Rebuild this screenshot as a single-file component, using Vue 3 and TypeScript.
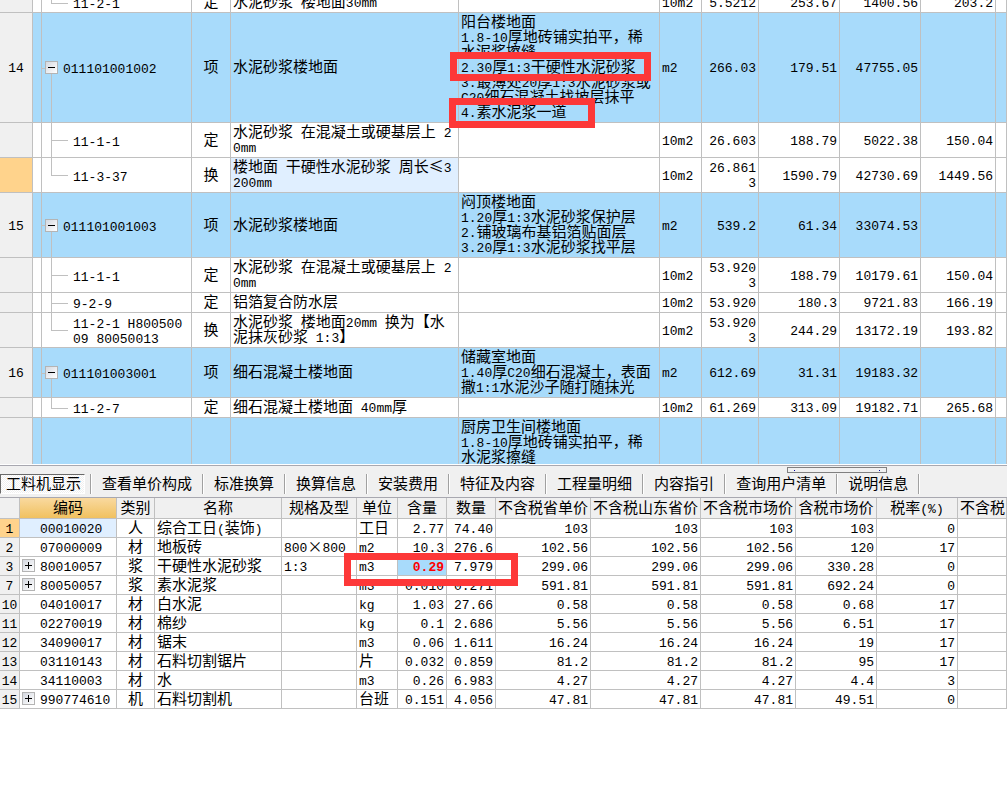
<script setup lang="ts">
import { h, ref } from 'vue'

interface BillRow {
  no: string
  kind: 'item' | 'child' | 'last' | 'partial'
  code: string
  type: string
  name: string
  feature?: string
  unit: string
  qty: string
  price: string
  total: string
  labor: string
  current?: boolean
}

interface MaterialRow {
  no: number
  code: string
  group?: boolean
  type: string
  name: string
  spec: string
  unit: string
  content: string
  qty: string
  prices: string[]
}

// Splits a string so that half-width and full-width characters get their own face and size.
const MixedText = (props: { text: string }) =>
  h(
    'span',
    { class: 'mixed' },
    (props.text.match(/[ -~]+|[^ -~]+/g) ?? []).map((run) =>
      /^[ -~]/.test(run) ? h('span', { class: 'half' }, run) : run,
    ),
  )
MixedText.props = ['text']

const billRows: BillRow[] = [
  { no: '', kind: 'last', code: '11-2-1', type: '定', name: '水泥砂浆 楼地面30mm', unit: '10m2', qty: '5.5212', price: '253.67', total: '1400.56', labor: '203.2' },
  { no: '14', kind: 'item', code: '011101001002', type: '项', name: '水泥砂浆楼地面', feature: '阳台楼地面\n1.8-10厚地砖铺实拍平，稀\n水泥浆擦缝\n2.30厚1:3干硬性水泥砂浆\n3.最薄处20厚1:3水泥砂浆或\nC20细石混凝土找坡层抹平\n4.素水泥浆一道', unit: 'm2', qty: '266.03', price: '179.51', total: '47755.05', labor: '' },
  { no: '', kind: 'child', code: '11-1-1', type: '定', name: '水泥砂浆 在混凝土或硬基层上 2\n0mm', unit: '10m2', qty: '26.603', price: '188.79', total: '5022.38', labor: '150.04' },
  { no: '', kind: 'last', code: '11-3-37', type: '换', name: '楼地面 干硬性水泥砂浆 周长≤3\n200mm', unit: '10m2', qty: '26.861\n3', price: '1590.79', total: '42730.69', labor: '1449.56', current: true },
  { no: '15', kind: 'item', code: '011101001003', type: '项', name: '水泥砂浆楼地面', feature: '闷顶楼地面\n1.20厚1:3水泥砂浆保护层\n2.铺玻璃布基铝箔贴面层\n3.20厚1:3水泥砂浆找平层', unit: 'm2', qty: '539.2', price: '61.34', total: '33074.53', labor: '' },
  { no: '', kind: 'child', code: '11-1-1', type: '定', name: '水泥砂浆 在混凝土或硬基层上 2\n0mm', unit: '10m2', qty: '53.920\n3', price: '188.79', total: '10179.61', labor: '150.04' },
  { no: '', kind: 'child', code: '9-2-9', type: '定', name: '铝箔复合防水层', unit: '10m2', qty: '53.920', price: '180.3', total: '9721.83', labor: '166.19' },
  { no: '', kind: 'last', code: '11-2-1 H800500\n09 80050013', type: '换', name: '水泥砂浆 楼地面20mm 换为【水\n泥抹灰砂浆 1:3】', unit: '10m2', qty: '53.920\n3', price: '244.29', total: '13172.19', labor: '193.82' },
  { no: '16', kind: 'item', code: '011101003001', type: '项', name: '细石混凝土楼地面', feature: '储藏室地面\n1.40厚C20细石混凝土，表面\n撒1:1水泥沙子随打随抹光', unit: 'm2', qty: '612.69', price: '31.31', total: '19183.32', labor: '' },
  { no: '', kind: 'last', code: '11-2-7', type: '定', name: '细石混凝土楼地面 40mm厚', unit: '10m2', qty: '61.269', price: '313.09', total: '19182.71', labor: '265.68' },
  { no: '', kind: 'partial', code: '', type: '', name: '', feature: '厨房卫生间楼地面\n1.8-10厚地砖铺实拍平，稀\n水泥浆擦缝', unit: '', qty: '', price: '', total: '', labor: '' },
]

const tabs = ['工料机显示', '查看单价构成', '标准换算', '换算信息', '安装费用', '特征及内容', '工程量明细', '内容指引', '查询用户清单', '说明信息']
const activeTab = ref(0)

const headers = ['编码', '类别', '名称', '规格及型', '单位', '含量', '数量', '不含税省单价', '不含税山东省价', '不含税市场价', '含税市场价', '税率(%)', '不含税']

const materials: MaterialRow[] = [
  { no: 1, code: '00010020', type: '人', name: '综合工日(装饰)', spec: '', unit: '工日', content: '2.77', qty: '74.40', prices: ['103', '103', '103', '103', '0'] },
  { no: 2, code: '07000009', type: '材', name: '地板砖', spec: '800×800', unit: 'm2', content: '10.3', qty: '276.6', prices: ['102.56', '102.56', '102.56', '120', '17'] },
  { no: 3, code: '80010057', group: true, type: '浆', name: '干硬性水泥砂浆', spec: '1:3', unit: 'm3', content: '0.29', qty: '7.979', prices: ['299.06', '299.06', '299.06', '330.28', '0'] },
  { no: 7, code: '80050057', group: true, type: '浆', name: '素水泥浆', spec: '', unit: 'm3', content: '0.010', qty: '0.271', prices: ['591.81', '591.81', '591.81', '692.24', '0'] },
  { no: 10, code: '04010017', type: '材', name: '白水泥', spec: '', unit: 'kg', content: '1.03', qty: '27.66', prices: ['0.58', '0.58', '0.58', '0.68', '17'] },
  { no: 11, code: '02270019', type: '材', name: '棉纱', spec: '', unit: 'kg', content: '0.1', qty: '2.686', prices: ['5.56', '5.56', '5.56', '6.51', '17'] },
  { no: 12, code: '34090017', type: '材', name: '锯末', spec: '', unit: 'm3', content: '0.06', qty: '1.611', prices: ['16.24', '16.24', '16.24', '19', '17'] },
  { no: 13, code: '03110143', type: '材', name: '石料切割锯片', spec: '', unit: '片', content: '0.032', qty: '0.859', prices: ['81.2', '81.2', '81.2', '95', '17'] },
  { no: 14, code: '34110003', type: '材', name: '水', spec: '', unit: 'm3', content: '0.26', qty: '6.983', prices: ['4.27', '4.27', '4.27', '4.4', '3'] },
  { no: 15, code: '990774610', group: true, type: '机', name: '石料切割机', spec: '', unit: '台班', content: '0.151', qty: '4.056', prices: ['47.81', '47.81', '47.81', '49.51', '0'] },
]
</script>

<template>
  <main class="workspace">
    <section class="bill-pane">
      <table class="grid bill">
        <colgroup>
          <col class="b-no" /><col class="b-mark" /><col class="b-code" /><col class="b-type" />
          <col class="b-name" /><col class="b-feature" /><col class="b-unit" /><col class="b-qty" />
          <col class="b-price" /><col class="b-price" /><col class="b-labor" /><col />
        </colgroup>
        <tbody>
          <tr v-for="(row, i) in billRows" :key="i" :class="[row.kind, { current: row.current }]">
            <th scope="row" class="row-no"><MixedText :text="row.no" /></th>
            <td></td>
            <td class="tree">
              <div class="tree-label">
                <button v-if="row.kind === 'item'" class="expander" type="button" aria-label="折叠">
                  <svg viewBox="0 0 11 11" width="11" height="11"><path d="M2 5.5h7" stroke="#000" /></svg>
                </button>
                <MixedText :text="row.code" />
              </div>
            </td>
            <td class="center"><MixedText :text="row.type" /></td>
            <td class="name"><MixedText :text="row.name" /></td>
            <td><MixedText :text="row.feature ?? ''" /></td>
            <td><MixedText :text="row.unit" /></td>
            <td class="num"><MixedText :text="row.qty" /></td>
            <td class="num"><MixedText :text="row.price" /></td>
            <td class="num"><MixedText :text="row.total" /></td>
            <td class="num"><MixedText :text="row.labor" /></td>
            <td></td>
          </tr>
        </tbody>
      </table>
      <div class="mark mark-mortar"></div>
      <div class="mark mark-paste"></div>
    </section>

    <nav class="tab-bar">
      <span class="grip"></span>
      <button
        v-for="(tab, i) in tabs"
        :key="tab"
        type="button"
        :class="['tab', { active: i === activeTab, first: i === 0 }]"
        @click="activeTab = i"
      ><span class="tab-text">{{ tab }}</span></button>
    </nav>

    <section class="material-pane">
      <table class="grid material">
        <colgroup>
          <col class="m-no" /><col class="m-code" /><col class="m-type" /><col class="m-name" />
          <col class="m-spec" /><col class="m-unit" /><col class="m-qty" /><col class="m-qty" />
          <col class="m-wide" /><col class="m-widest" /><col class="m-wide" /><col class="m-rate" />
          <col class="m-rate" /><col />
        </colgroup>
        <thead>
          <tr>
            <td class="corner"></td>
            <th v-for="(label, i) in headers" :key="i" scope="col" :class="{ sorted: i === 0 }">
              <MixedText :text="label" />
            </th>
          </tr>
        </thead>
        <tbody>
          <tr v-for="row in materials" :key="row.no" :class="{ current: row.no === 1 }">
            <th scope="row" class="row-no"><MixedText :text="String(row.no)" /></th>
            <td class="code">
              <div class="code-label">
                <span class="slot">
                  <button v-if="row.group" class="expander" type="button" aria-label="展开">
                    <svg viewBox="0 0 11 11" width="11" height="11"><path d="M2 5.5h7M5.5 2v7" stroke="#000" /></svg>
                  </button>
                </span>
                <MixedText :text="row.code" />
              </div>
            </td>
            <td class="center"><MixedText :text="row.type" /></td>
            <td><MixedText :text="row.name" /></td>
            <td><MixedText :text="row.spec" /></td>
            <td><MixedText :text="row.unit" /></td>
            <td :class="['num', { changed: row.no === 3 }]"><MixedText :text="row.content" /></td>
            <td class="num"><MixedText :text="row.qty" /></td>
            <td v-for="(price, i) in row.prices" :key="i" class="num"><MixedText :text="price" /></td>
            <td></td>
          </tr>
        </tbody>
      </table>
      <div class="mark mark-content"></div>
    </section>
  </main>
</template>

<style>
body {
  background: #fff;
}
.mixed {
  white-space: pre;
}
.mixed .half {
  font-family: "Liberation Mono", monospace;
  font-size: 13px;
  line-height: 0;
}
</style>

<style scoped>
.workspace {
  display: flex;
  flex-direction: column;
  min-height: 100vh;
  overflow: hidden;
  color: #000;
  font-family: "Noto Sans CJK SC", sans-serif;
  font-size: 15px;
  line-height: 15px;
}
.bill-pane {
  position: relative;
  flex: 0 0 464px;
  height: 464px;
  overflow: hidden;
}
.grid {
  width: 100%;
  table-layout: fixed;
  border-collapse: separate;
  border-spacing: 0;
}
.grid td,
.grid th {
  box-sizing: border-box;
  padding: 0 2px 4px;
  border-right: 1px solid #c0c0c0;
  border-bottom: 1px solid #c0c0c0;
  font-weight: normal;
  text-align: left;
  vertical-align: middle;
}
.grid .center,
.grid .row-no {
  text-align: center;
}
.grid .num {
  text-align: right;
}
.grid .row-no {
  background: #f0f0f0;
}
.grid .current .row-no {
  background: #ffd38c;
}
.bill {
  margin-top: -7px;
}
.b-no { width: 33px; }
.b-mark { width: 9px; }
.b-code { width: 150px; }
.b-type { width: 39px; }
.b-name { width: 228px; }
.b-feature { width: 201px; }
.b-unit { width: 42px; }
.b-qty { width: 57px; }
.b-price { width: 81px; }
.b-labor { width: 75px; }
.item td,
.partial td {
  background: #a8dbfb;
}
.current .name,
.current .code {
  background: #e0efff;
}
.grid .tree {
  position: relative;
  padding: 1px 0 3px;
}
.tree-label {
  position: relative;
  z-index: 1;
  display: flex;
  align-items: flex-end;
  padding-left: 31px;
}
.item .tree-label {
  gap: 5px;
  padding-left: 3px;
}
.tree::before,
.tree::after {
  position: absolute;
  content: "";
  background: #c0c0c0;
}
.tree::before {
  top: 0;
  bottom: 0;
  left: 9px;
  width: 1px;
}
.tree::after {
  top: 50%;
  left: 9px;
  width: 17px;
  height: 1px;
}
.last .tree::before {
  bottom: 50%;
}
.item .tree::before {
  top: 50%;
}
.item .tree::after {
  left: 0;
  width: 4px;
}
.partial .tree::before,
.partial .tree::after {
  display: none;
}
.expander {
  display: block;
  flex: none;
  box-sizing: border-box;
  width: 13px;
  height: 13px;
  padding: 0;
  border: 1px solid #b4b4b4;
  background: linear-gradient(135deg, #d4d8e0, #fff);
}
.expander svg {
  display: block;
}
.mark {
  position: absolute;
  z-index: 2;
  box-sizing: border-box;
  border: 7px solid #fd3838;
  pointer-events: none;
}
.mark-mortar {
  top: 52px;
  left: 450px;
  width: 201px;
  height: 29px;
}
.mark-paste {
  top: 98px;
  left: 449px;
  width: 146px;
  height: 30px;
}
.mark-content {
  top: 55px;
  left: 344px;
  width: 174px;
  height: 33px;
}
.tab-bar {
  position: relative;
  display: flex;
  box-sizing: border-box;
  height: 33px;
  margin-top: 1px;
  padding-top: 8px;
  border-top: 1px solid #a8a8b0;
  border-bottom: 1px solid #a8a8b0;
  background: #f0f0f0;
}
.grip {
  position: absolute;
  top: 1px;
  right: 120px;
  box-sizing: border-box;
  width: 100px;
  height: 6px;
  border: 1px solid #808080;
  background:
    linear-gradient(#0000a0, #0000a0) 6px 2px / 1px 1px no-repeat,
    linear-gradient(#0000a0, #0000a0) 91px 2px / 1px 1px no-repeat,
    #f0f0f0;
}
.tab {
  box-sizing: border-box;
  height: 20px;
  margin: 0 1px 0 0;
  padding: 0 10px 4px;
  border: 0;
  border-right: 1px solid #a0a0a0;
  background: none;
  box-shadow: 1px 0 #fff;
  color: #000;
  font: inherit;
  white-space: nowrap;
}
.tab.first {
  padding: 0 5px 0 0;
}
.tab.first .tab-text {
  display: block;
  box-sizing: border-box;
  height: 20px;
  padding: 0 3px 0 5px;
}
.tab.active .tab-text {
  border: 1px solid;
  border-color: #696969 #fff #fff #696969;
  background: repeating-conic-gradient(#fff 0 25%, #f0f0f0 0 50%) 0 0 / 2px 2px;
}
.material-pane {
  position: relative;
}
.m-no { width: 20px; }
.m-code { width: 97px; }
.m-type { width: 38px; }
.m-name { width: 127px; }
.m-spec { width: 75px; }
.m-unit { width: 41px; }
.m-qty { width: 49px; }
.m-wide { width: 95px; }
.m-widest { width: 110px; }
.m-rate { width: 81px; }
.material td,
.material tbody th {
  padding: 0 2px 3px;
}
.material .row-no {
  padding: 0 0 3px;
}
.material thead th,
.material .corner {
  padding: 1px 2px 4px;
  background: #f0f0f0;
  text-align: center;
}
.material thead .sorted {
  background: linear-gradient(#f9d99f, #f1c15f);
}
.code-label {
  display: flex;
  align-items: flex-end;
  height: 15px;
}
.slot {
  flex: none;
  width: 18px;
}
.material td.changed {
  background: #a8dbfb;
  color: #f00;
  font-weight: bold;
}
</style>
